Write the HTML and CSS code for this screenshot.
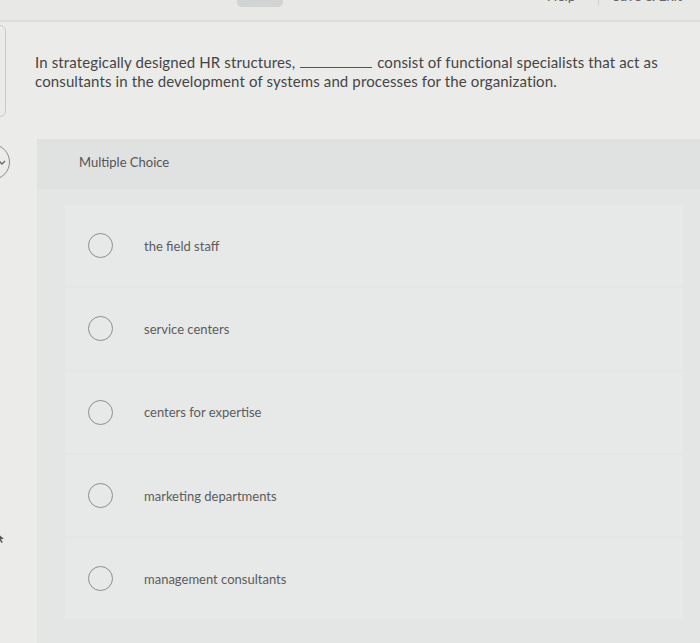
FILE: index.html
```html
<!DOCTYPE html>
<html>
<head>
<meta charset="utf-8">
<link rel="stylesheet" href="styles.css">
</head>
<body>
<header class="topbar">
  <span class="topbtn"></span>
  <nav class="toplinks">
    <span class="toplink">Help</span>
    <span class="sep"></span>
    <span class="toplink">Save &amp; Exit</span>
  </nav>
</header>
<div class="page">
  <aside class="rail">
    <div class="railpanel"></div>
    <div class="railcircle">
      <svg width="8" height="8" viewBox="0 0 8 8"><path d="M1 3 L4 6 L7 3" fill="none" stroke="#666" stroke-width="1.4"/></svg>
    </div>
    <svg class="cursor" width="9" height="12" viewBox="0 0 9 12"><path d="M1 1 L1 10 L3.5 7.5 L5.5 11 L6.8 10.3 L4.8 7 L8 7 Z" fill="#555"/></svg>
  </aside>
  <main class="main">
    <p class="question">In strategically designed HR structures, <span class="blank"></span> consist of functional specialists that act as consultants in the development of systems and processes for the organization.</p>
    <section class="card">
      <div class="cardhead">Multiple Choice</div>
      <div class="options">
        <div class="option"><span class="radio"></span><span class="label">the field staff</span></div>
        <div class="option"><span class="radio"></span><span class="label">service centers</span></div>
        <div class="option"><span class="radio"></span><span class="label">centers for expertise</span></div>
        <div class="option"><span class="radio"></span><span class="label">marketing departments</span></div>
        <div class="option"><span class="radio"></span><span class="label">management consultants</span></div>
      </div>
    </section>
  </main>
</div>
</body>
</html>
```
FILE: styles.css
```css
html, body {
  margin: 0;
  padding: 0;
  height: 100%;
}
body {
  background: #ebebea;
  font-family: Lato, "Open Sans", sans-serif;
  color: #444;
  overflow: hidden;
}
.topbar {
  height: 20px;
  background: #e8e8e7;
  border-bottom: 2px solid #dcdcdb;
  display: flex;
  align-items: flex-start;
  overflow: hidden;
}
.topbtn {
  display: block;
  width: 46px;
  height: 7px;
  margin-left: 237px;
  background: #d2d3d3;
  border-radius: 0 0 5px 5px;
}
.toplinks {
  margin-left: auto;
  margin-right: 18px;
  display: flex;
  align-items: flex-start;
  margin-top: -11px;
  font-size: 14px;
  color: #666;
}
.toplink {
  line-height: 14px;
}
.sep {
  width: 1px;
  height: 16px;
  background: #cfcfcf;
  margin: 0 14px 0 22px;
}
.page {
  display: flex;
}
.rail {
  width: 8px;
  flex: none;
  display: flex;
  flex-direction: column;
}
.railpanel {
  margin-top: 3px;
  margin-left: -8px;
  width: 12px;
  height: 90px;
  border: 1px solid #cacaca;
  border-radius: 6px;
}
.railcircle {
  margin-top: 27px;
  margin-left: -26px;
  width: 31px;
  height: 34px;
  border: 1.5px solid #8a8a8a;
  border-radius: 50%;
  display: flex;
  align-items: center;
  justify-content: flex-end;
  padding-right: 3px;
}
.cursor {
  margin-top: 352px;
  margin-left: -4px;
}
.main {
  flex: 1;
  padding-left: 27px;
}
.question {
  margin: 31px 8px 0 0;
  font-size: 15px;
  line-height: 19px;
  letter-spacing: 0.12px;
  color: #454545;
}
.blank {
  display: inline-block;
  width: 72px;
  border-bottom: 1px solid #555;
  vertical-align: baseline;
  margin: 0 1px;
}
.card {
  margin-top: 48px;
  margin-left: 2px;
  background: #e4e5e5;
  height: 505px;
}
.cardhead {
  height: 45px;
  padding-bottom: 5px;
  background: #e0e1e1;
  padding-left: 42px;
  display: flex;
  align-items: center;
  font-size: 13px;
  color: #555;
}
.options {
  margin-left: 28px;
  margin-right: 17px;
  padding-top: 16px;
  display: flex;
  flex-direction: column;
  gap: 2px;
}
.option {
  height: 81.3px;
  display: flex;
  align-items: center;
  padding-left: 23px;
  background: #e7e8e8;
}
.radio {
  width: 23px;
  height: 23px;
  border: 1.5px solid #8e8e8e;
  border-radius: 50%;
  flex: none;
}
.label {
  margin-left: 31px;
  font-size: 13px;
  color: #5c5c5c;
}
```
